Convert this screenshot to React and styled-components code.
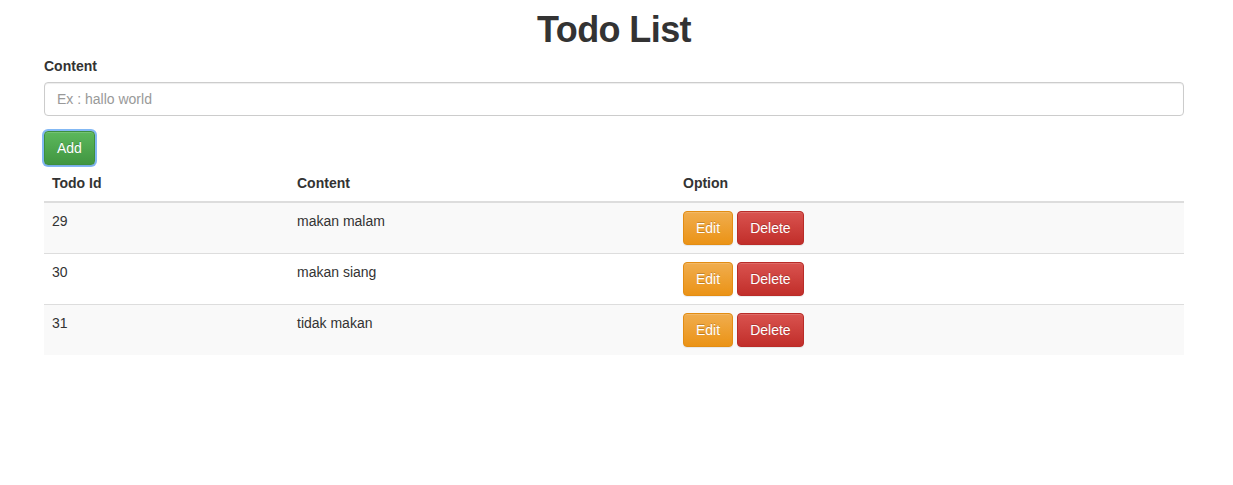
import React from "react";
import styled, { createGlobalStyle } from "styled-components";

const GlobalStyle = createGlobalStyle`
    body {
        margin: 0;
        background: #fff;
        font-family: "Liberation Sans", Arial, Helvetica, sans-serif;
        font-size: 14px;
        line-height: 1.42857;
        color: #333;
    }
    * { box-sizing: border-box; }
`

const Container = styled.div`
    width: 1140px;
    margin-left: 44px;
`

const Title = styled.h1`
    margin: 10px 0 7px;
    font-size: 36px;
    font-weight: 700;
    letter-spacing: -0.6px;
    line-height: 1.1;
    text-align: center;
    color: #333;
`

const FormGroup = styled.div`
    margin-bottom: 15px;
`

const Label = styled.label`
    display: block;
    margin-bottom: 5px;
    font-weight: 700;
`

const Input = styled.input`
    display: block;
    width: 100%;
    height: 34px;
    padding: 6px 12px;
    font-family: inherit;
    font-size: 14px;
    color: #555;
    border: 1px solid #ccc;
    border-radius: 4px;
    box-shadow: inset 0 1px 1px rgba(0, 0, 0, .075);
    outline: none;
    &::placeholder { color: #999; }
`

const variants = {
    success: { top: "#5cb85c", bottom: "#419641", border: "#3e8f3e" },
    warning: { top: "#f0ad4e", bottom: "#eb9316", border: "#e38d13" },
    danger: { top: "#d9534f", bottom: "#c12e2a", border: "#b92c28" },
}

const Button = styled.button`
    display: inline-block;
    height: 34px;
    padding: 6px 12px;
    font-family: inherit;
    font-size: 14px;
    line-height: 20px;
    color: #fff;
    text-shadow: 0 -1px 0 rgba(0, 0, 0, .2);
    background-image: linear-gradient(to bottom, ${p => variants[p.$variant].top} 0%, ${p => variants[p.$variant].bottom} 100%);
    border: 1px solid ${p => variants[p.$variant].border};
    border-radius: 4px;
    box-shadow: inset 0 1px 0 rgba(255, 255, 255, .15), 0 1px 1px rgba(0, 0, 0, .075)
        ${p => p.$focused ? ", 0 0 0 2px rgba(90, 160, 240, .75)" : ""};
    cursor: pointer;
    margin-right: ${p => p.$gap || 0}px;
`

const Table = styled.table`
    width: 100%;
    border-collapse: collapse;
    border-spacing: 0;
`

const Th = styled.th`
    width: ${p => p.$w ? p.$w + "px" : "auto"};
    padding: 8px;
    text-align: left;
    vertical-align: bottom;
    border-bottom: 2px solid #ddd;
    line-height: 20px;
`

const Row = styled.tr`
    background: ${p => p.$odd ? "#f9f9f9" : "transparent"};
`

const Td = styled.td`
    padding: 8px;
    vertical-align: top;
    line-height: 20px;
    border-top: 1px solid #ddd;
`

const todos = [
    { id: 29, content: "makan malam" },
    { id: 30, content: "makan siang" },
    { id: 31, content: "tidak makan" },
]

export default function App() {
    return (
        <Container>
            <GlobalStyle />
            <Title>Todo List</Title>

            <FormGroup>
                <Label>Content</Label>
                <Input placeholder="Ex : hallo world" />
            </FormGroup>

            <Button $variant="success" $focused>Add</Button>

            <Table>
                <thead>
                    <tr>
                        <Th $w={245}>Todo Id</Th>
                        <Th $w={386}>Content</Th>
                        <Th>Option</Th>
                    </tr>
                </thead>
                <tbody>
                    {todos.map((todo, i) => (
                        <Row key={todo.id} $odd={i % 2 === 0}>
                            <Td>{todo.id}</Td>
                            <Td>{todo.content}</Td>
                            <Td>
                                <Button $variant="warning" $gap={4}>Edit</Button>
                                <Button $variant="danger">Delete</Button>
                            </Td>
                        </Row>
                    ))}
                </tbody>
            </Table>
        </Container>
    )
}
